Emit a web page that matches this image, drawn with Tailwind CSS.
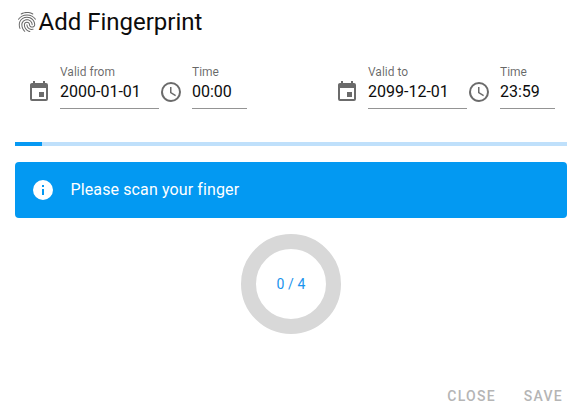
<!DOCTYPE html>
<html lang="en">
<head>
<meta charset="utf-8">
<title>Add Fingerprint</title>
<script src="https://cdn.jsdelivr.net/npm/@tailwindcss/browser@4"></script>
</head>
<body class="bg-white font-[Roboto,sans-serif] text-[#0c0c0c]">
<svg class="hidden">
  <symbol id="calendar" viewBox="0 0 24 24"><path d="M19 3h-1V1h-2v2H8V1H6v2H5c-1.11 0-2 .9-2 2v14a2 2 0 0 0 2 2h14a2 2 0 0 0 2-2V5a2 2 0 0 0-2-2zm0 16H5V8h14v11zM17 12h-5v5h5z"/></symbol>
  <symbol id="clock" viewBox="0 0 24 24"><path d="M12 20a8 8 0 0 0 8-8 8 8 0 0 0-8-8 8 8 0 0 0-8 8 8 8 0 0 0 8 8m0-18a10 10 0 0 1 10 10 10 10 0 0 1-10 10C6.47 22 2 17.500 2 12A10 10 0 0 1 12 2m.5 5v5.25l4.500 2.670-.75 1.230L11 13V7h1.500z"/></symbol>
</svg>
<main class="flex h-[412px] w-[580px] flex-col overflow-hidden pr-[13px] pl-[15px]">
  <header class="flex h-11 items-center">
    <svg class="size-6 shrink-0 fill-[#666]" viewBox="0 0 24 24"><path d="M17.81 4.47c-.08 0-.16-.02-.23-.06C15.66 3.42 14 3 12.01 3c-1.98 0-3.86.47-5.57 1.41-.24.13-.54.04-.68-.2-.13-.24-.04-.55.2-.68C7.82 2.52 9.86 2 12.01 2c2.13 0 3.99.47 6.03 1.52.25.13.34.43.21.67-.09.18-.26.28-.44.28zM3.5 9.72c-.1 0-.2-.03-.29-.09-.23-.16-.28-.47-.12-.7.99-1.4 2.25-2.5 3.75-3.27C9.98 4.04 14 4.03 17.15 5.65c1.5.77 2.76 1.86 3.75 3.25.16.22.11.54-.12.7-.23.16-.54.11-.7-.12-.9-1.26-2.04-2.25-3.39-2.94-2.87-1.47-6.54-1.47-9.4.01-1.36.7-2.5 1.7-3.4 2.96-.08.14-.23.21-.39.21zm6.25 12.07c-.13 0-.26-.05-.35-.15-.87-.87-1.34-1.43-2.01-2.64-.69-1.23-1.05-2.73-1.05-4.34 0-2.97 2.54-5.39 5.66-5.39s5.66 2.42 5.66 5.39c0 .28-.22.5-.5.5s-.5-.22-.5-.5c0-2.42-2.09-4.39-4.66-4.39-2.57 0-4.66 1.97-4.66 4.39 0 1.44.32 2.77.93 3.85.64 1.15 1.08 1.64 1.85 2.42.19.2.19.51 0 .71-.11.1-.24.15-.37.15zm7.17-1.85c-1.19 0-2.24-.3-3.1-.89-1.49-1.01-2.38-2.65-2.38-4.39 0-.28.22-.5.5-.5s.5.22.5.5c0 1.41.72 2.74 1.94 3.56.71.48 1.54.71 2.54.71.24 0 .64-.03 1.04-.1.27-.05.53.13.58.41.05.27-.13.53-.41.58-.57.11-1.07.12-1.21.12zM14.91 22c-.04 0-.09-.01-.13-.02-1.59-.44-2.63-1.03-3.72-2.1-1.4-1.39-2.17-3.24-2.17-5.22 0-1.62 1.38-2.94 3.08-2.94 1.7 0 3.08 1.32 3.08 2.94 0 1.07.93 1.94 2.08 1.94s2.08-.87 2.08-1.94c0-3.77-3.25-6.83-7.25-6.83-2.84 0-5.44 1.58-6.61 4.03-.39.81-.59 1.76-.59 2.8 0 .78.07 2.01.67 3.61.1.26-.03.55-.29.64-.26.1-.55-.04-.64-.29-.49-1.31-.73-2.61-.73-3.96 0-1.2.23-2.29.68-3.24 1.33-2.79 4.28-4.6 7.51-4.6 4.55 0 8.25 3.51 8.25 7.83 0 1.62-1.38 2.94-3.08 2.94s-3.08-1.32-3.08-2.94c0-1.07-.93-1.94-2.08-1.94s-2.08.87-2.08 1.94c0 1.71.66 3.31 1.87 4.51.95.94 1.86 1.46 3.27 1.85.27.07.42.35.35.61-.05.23-.26.38-.47.38z"/></svg>
    <h1 class="ml-[-0.5px] text-[24px] leading-8">Add Fingerprint</h1>
  </header>

  <section class="mt-5 grid h-[45px] grid-cols-[308px_1fr] pl-[11.5px]">
    <div class="flex">
      <svg class="mt-[15.5px] size-6 shrink-0 fill-[#6b6b6b]"><use href="#calendar"/></svg>
      <label class="ml-[9.5px] w-[99px] border-b border-[#949494]">
        <span class="block text-[12px] leading-4 text-black/60">Valid from</span>
        <span class="block text-[16px] leading-6">2000-01-01</span>
      </label>
      <svg class="mt-4 ml-[-0.5px] size-6 shrink-0 fill-[#6b6b6b]"><use href="#clock"/></svg>
      <label class="ml-[9.5px] w-[55px] border-b border-[#949494]">
        <span class="block text-[12px] leading-4 text-black/60">Time</span>
        <span class="block text-[16px] leading-6">00:00</span>
      </label>
    </div>
    <div class="flex">
      <svg class="mt-[15.5px] size-6 shrink-0 fill-[#6b6b6b]"><use href="#calendar"/></svg>
      <label class="ml-[9.5px] w-[99px] border-b border-[#949494]">
        <span class="block text-[12px] leading-4 text-black/60">Valid to</span>
        <span class="block text-[16px] leading-6">2099-12-01</span>
      </label>
      <svg class="mt-4 ml-[-0.5px] size-6 shrink-0 fill-[#6b6b6b]"><use href="#clock"/></svg>
      <label class="ml-[9.5px] w-[55px] border-b border-[#949494]">
        <span class="block text-[12px] leading-4 text-black/60">Time</span>
        <span class="block text-[16px] leading-6">23:59</span>
      </label>
    </div>
  </section>

  <div class="mt-[33px] h-1 shrink-0 bg-[#bfe0fb]"><div class="h-full w-[27px] bg-[#0699f3]"></div></div>

  <div class="mt-4 flex h-14 shrink-0 items-center rounded bg-[#0399f2] pl-[15.5px] text-white">
    <svg class="size-6 fill-white" viewBox="0 0 24 24"><path d="M13 9h-2V7h2m0 10h-2v-6h2m-1-9A10 10 0 0 0 2 12a10 10 0 0 0 10 10 10 10 0 0 0 10-10A10 10 0 0 0 12 2z"/></svg>
    <p class="ml-4 text-[16px] leading-6 tracking-[0.12px]">Please scan your finger</p>
  </div>

  <div class="mt-4 flex size-[100px] shrink-0 items-center justify-center self-center rounded-full border-[15px] border-[#d8d8d8] text-[14px] tracking-[0.1px] text-[#1993ed]">0 / 4</div>

  <footer class="mt-auto flex h-8 items-center justify-end gap-7 pr-1 text-[14px] font-medium tracking-[1.25px] text-[#b5b5b5]">
    <button>CLOSE</button>
    <button>SAVE</button>
  </footer>
</main>
</body>
</html>
